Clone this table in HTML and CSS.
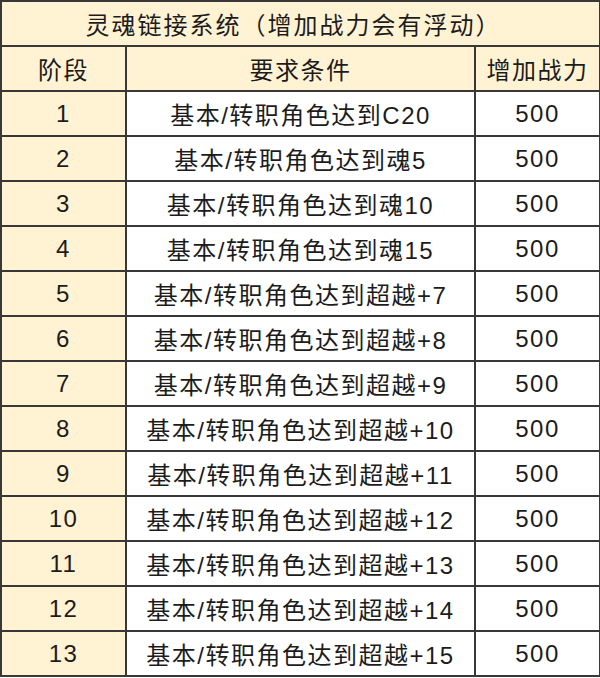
FILE: index.html
```html
<!DOCTYPE html>
<html lang="zh">
<head>
<meta charset="utf-8">
<title>灵魂链接系统</title>
<link rel="stylesheet" href="styles.css">
</head>
<body>
<table class="soul-table">
  <colgroup>
    <col class="c-stage">
    <col class="c-req">
    <col class="c-power">
  </colgroup>
  <tr class="title-row"><td colspan="3">灵魂链接系统（增加战力会有浮动）</td></tr>
  <tr class="head-row"><td>阶段</td><td>要求条件</td><td>增加战力</td></tr>
  <tr><td class="stage">1</td><td>基本/转职角色达到C20</td><td>500</td></tr>
  <tr><td class="stage">2</td><td>基本/转职角色达到魂5</td><td>500</td></tr>
  <tr><td class="stage">3</td><td>基本/转职角色达到魂10</td><td>500</td></tr>
  <tr><td class="stage">4</td><td>基本/转职角色达到魂15</td><td>500</td></tr>
  <tr><td class="stage">5</td><td>基本/转职角色达到超越+7</td><td>500</td></tr>
  <tr><td class="stage">6</td><td>基本/转职角色达到超越+8</td><td>500</td></tr>
  <tr><td class="stage">7</td><td>基本/转职角色达到超越+9</td><td>500</td></tr>
  <tr><td class="stage">8</td><td>基本/转职角色达到超越+10</td><td>500</td></tr>
  <tr><td class="stage">9</td><td>基本/转职角色达到超越+11</td><td>500</td></tr>
  <tr><td class="stage">10</td><td>基本/转职角色达到超越+12</td><td>500</td></tr>
  <tr><td class="stage">11</td><td>基本/转职角色达到超越+13</td><td>500</td></tr>
  <tr><td class="stage">12</td><td>基本/转职角色达到超越+14</td><td>500</td></tr>
  <tr><td class="stage">13</td><td>基本/转职角色达到超越+15</td><td>500</td></tr>
</table>
</body>
</html>
```
FILE: styles.css
```css
html, body {
  margin: 0;
  padding: 0;
  background: #ffffff;
}

.soul-table {
  width: 599px;
  border-collapse: collapse;
  table-layout: fixed;
  font-family: "Liberation Sans", "Noto Sans CJK SC", sans-serif;
  font-size: 24px;
  color: #1c1c1c;
}

.c-stage { width: 125px; }
.c-req { width: 349px; }
.c-power { width: 125px; }

.soul-table td {
  border: 2px solid #383838;
  height: 43px;
  padding: 0;
  text-align: center;
  vertical-align: middle;
  letter-spacing: 1.5px;
  background: #ffffff;
}

.title-row td,
.head-row td,
.soul-table td.stage {
  background: #fff3d4;
}

.title-row td {
  letter-spacing: 2px;
  padding-right: 14px;
}
```
